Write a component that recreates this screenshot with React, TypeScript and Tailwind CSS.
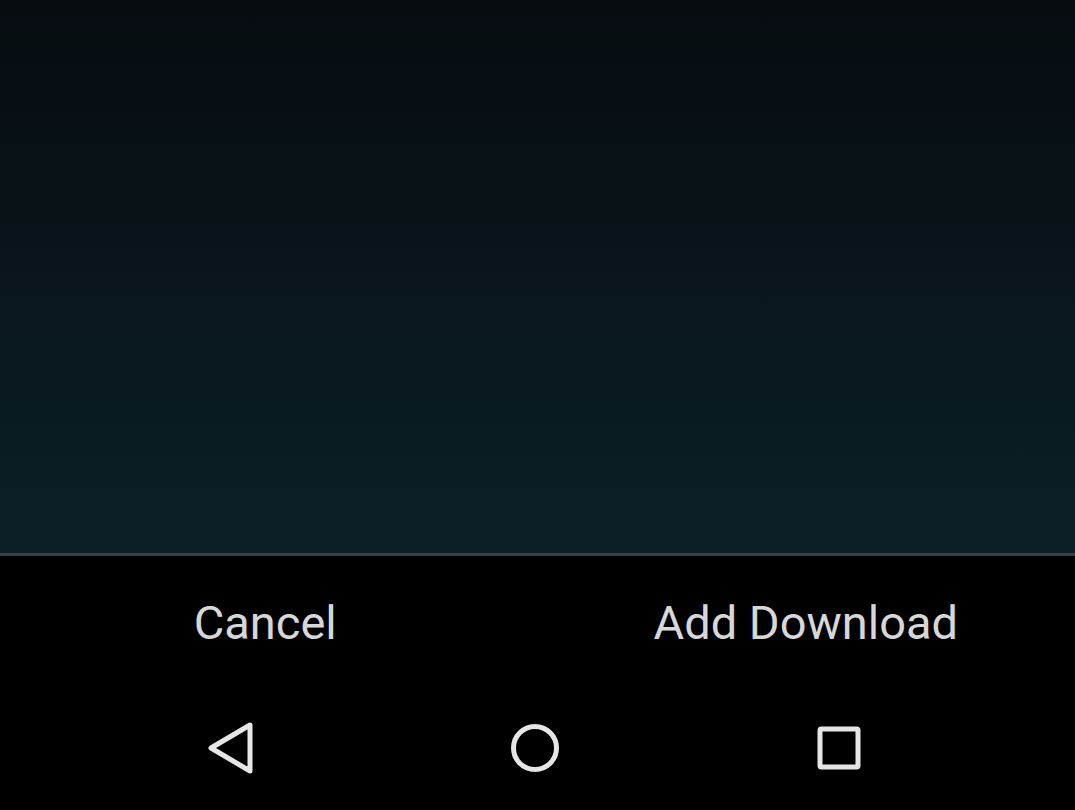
export default function App() {
  return (
    <div className="w-[1075px] h-[810px] flex flex-col bg-black font-['Roboto',sans-serif] overflow-hidden">
      <div className="h-[553px] bg-gradient-to-b from-[#060c10] to-[#0c1f27]" />
      <div className="h-[3px] bg-[#3a3f41]" />
      <div className="h-[130px] grid grid-cols-2 pt-[4px]">
        <button className="flex items-center justify-center pr-[7px] text-[47px] text-[#d7d7d7]">Cancel</button>
        <button className="flex items-center justify-center pr-[1px] text-[47px] text-[#d7d7d7]">Add Download</button>
      </div>
      <div className="flex-1 flex items-center pl-[206px]">
        <svg width="52" height="52" viewBox="0 0 52 52" fill="none" stroke="#e6e6e6" strokeWidth="5" strokeLinejoin="round">
          <path d="M44 3 L44 49 L5 26 Z" />
        </svg>
        <svg className="ml-[251px]" width="52" height="52" viewBox="0 0 52 52" fill="none" stroke="#e6e6e6" strokeWidth="5">
          <circle cx="26" cy="26" r="21.5" />
        </svg>
        <svg className="ml-[255px]" width="46" height="46" viewBox="0 0 46 46" fill="none" stroke="#e6e6e6" strokeWidth="5" strokeLinejoin="round">
          <rect x="4" y="4" width="38" height="38" rx="1.5" />
        </svg>
      </div>
    </div>
  )
}
